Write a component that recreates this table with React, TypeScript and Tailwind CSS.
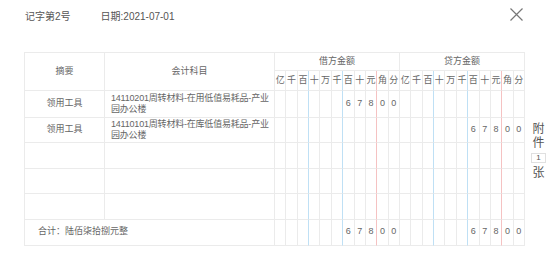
import React from "react";

const labels = ["亿", "千", "百", "十", "万", "千", "百", "十", "元", "角", "分"];

function borderFor(i: number) {
  if (i === 2 || i === 5) return "border-r border-b border-r-[#bfe0f5] border-b-[#ebebeb]";
  if (i === 8) return "border-r border-b border-r-[#f5c2c2] border-b-[#ebebeb]";
  return "border-r border-b border-[#ebebeb]";
}

function DigitCells({ value }: { value?: string[] }) {
  return (
    <>
      {labels.map((_, i) => (
        <td key={i} className={`${borderFor(i)} text-center p-0 text-[9px] text-[#666]`}>
          {value ? value[i] : ""}
        </td>
      ))}
    </>
  );
}

const amt = ["", "", "", "", "", "", "6", "7", "8", "0", "0"];

export default function App() {
  const font = { fontFamily: '"Liberation Sans", "Noto Sans CJK SC", sans-serif' };
  return (
    <div className="w-[554px] h-[267px] bg-white text-[#666]" style={font}>
      <div className="flex justify-between h-[32px] pl-[25px] pr-[31px]">
        <div className="flex items-center text-[10px] text-[#555]">
          <span>记字第2号</span>
          <span className="ml-[30px]">日期:2021-07-01</span>
        </div>
        <svg className="mt-[8px]" width="13" height="13" viewBox="0 0 13 13">
          <path d="M0.5 0.5 L12.5 12.5 M12.5 0.5 L0.5 12.5" stroke="#777" strokeWidth="1.2" fill="none" />
        </svg>
      </div>
      <div className="flex mt-[20px]">
        <table className="ml-[24px] w-[499px] table-fixed border-separate border-spacing-0 border-t border-l border-[#ebebeb] text-[9px]">
          <colgroup>
            <col className="w-[80px]" />
            <col className="w-[170px]" />
            {Array.from({ length: 22 }).map((_, i) => (
              <col key={i} className="w-[11.36px]" />
            ))}
          </colgroup>
          <tbody>
            <tr className="h-[18px]">
              <td rowSpan={2} className="border-r border-b border-[#ebebeb] text-center">摘要</td>
              <td rowSpan={2} className="border-r border-b border-[#ebebeb] text-center">会计科目</td>
              <td colSpan={11} className="border-r border-b border-[#ebebeb] text-center">借方金额</td>
              <td colSpan={11} className="border-r border-b border-[#ebebeb] text-center">贷方金额</td>
            </tr>
            <tr className="h-[20px]">
              <DigitCells value={labels} />
              <DigitCells value={labels} />
            </tr>
            <tr className="h-[26.5px]">
              <td className="border-r border-b border-[#ebebeb] text-center">领用工具</td>
              <td className="border-r border-b border-[#ebebeb] pl-[6px] pr-0 leading-[10.5px] tracking-[-0.2px]">
                14110201周转材料-在用低值易耗品-产业园办公楼
              </td>
              <DigitCells value={amt} />
              <DigitCells />
            </tr>
            <tr className="h-[25.5px]">
              <td className="border-r border-b border-[#ebebeb] text-center">领用工具</td>
              <td className="border-r border-b border-[#ebebeb] pl-[6px] pr-0 leading-[10.5px] tracking-[-0.2px]">
                14110101周转材料-在库低值易耗品-产业园办公楼
              </td>
              <DigitCells />
              <DigitCells value={amt} />
            </tr>
            {[0, 1, 2].map((r) => (
              <tr key={r} className="h-[25.5px]">
                <td className="border-r border-b border-[#ebebeb]"></td>
                <td className="border-r border-b border-[#ebebeb]"></td>
                <DigitCells />
                <DigitCells />
              </tr>
            ))}
            <tr className="h-[26px]">
              <td colSpan={2} className="border-r border-b border-[#ebebeb] pl-[13px]">合计：陆佰柒拾捌元整</td>
              <DigitCells value={amt} />
              <DigitCells value={amt} />
            </tr>
          </tbody>
        </table>
        <div className="ml-[6px] mt-[70px] w-[15px] flex flex-col items-center text-[12px] leading-[14px] text-[#555]">
          <span>附</span>
          <span>件</span>
          <div className="mt-[3px] w-[15px] h-[10px] border border-[#e0e0e0] flex items-center justify-center text-[8px] leading-none">1</div>
          <span className="mt-[3px]">张</span>
        </div>
      </div>
    </div>
  );
}
